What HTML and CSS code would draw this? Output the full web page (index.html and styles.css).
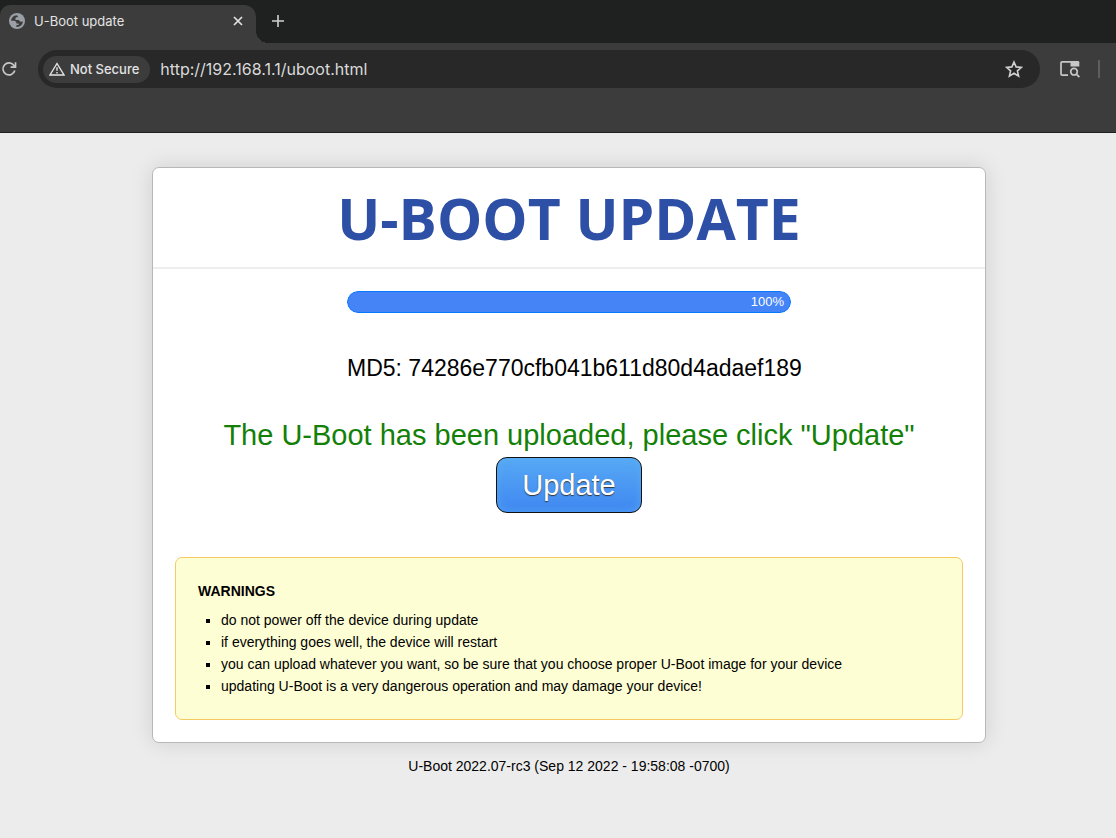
FILE: index.html
```html
<!DOCTYPE html>
<html lang="en">
<head>
    <meta charset="UTF-8">
    <meta name="viewport" content="width=device-width, initial-scale=1">
    <title>U-Boot update</title>
    <link rel="stylesheet" href="styles.css">
</head>
<body>

<header class="browser">
    <div class="tab-strip">
        <div class="tab">
            <svg class="globe" viewBox="0 0 16 16" width="16" height="16">
                <circle cx="8" cy="8" r="8" fill="#9aa0a6"/>
                <path d="M7.6 2.2C4.6 2.4 2.2 4.8 2.1 7.7H5c1.3 0 2.4 1 2.4 2.3v.6h2.2v1.3H7.4v2c3.6.3 6.4-2.2 6.5-5.7-.8.5-1.8.7-2.7.3-.7-.3-1-.9-1.1-1.6H6.5V5.4c0-.7.5-1.2 1.2-1.2h1.1V3.4c0-.5-.5-1-1.2-1.2z" fill="#3c3c3c"/>
            </svg>
            <span class="tab-title">U-Boot update</span>
            <button class="icon-btn tab-close" aria-label="Close tab">
                <svg viewBox="0 0 10 10" width="10" height="10"><path d="M1 1l8 8M9 1l-8 8" stroke="#e3e3e3" stroke-width="1.7"/></svg>
            </button>
        </div>
        <button class="icon-btn new-tab" aria-label="New tab">
            <svg viewBox="0 0 12 12" width="12" height="12"><path d="M6 0v12M0 6h12" stroke="#d0d0d0" stroke-width="1.6"/></svg>
        </button>
    </div>
    <div class="toolbar">
        <button class="icon-btn reload" aria-label="Reload">
            <svg viewBox="0 0 16 16" width="16" height="16" fill="none" stroke="#c7c7c7" stroke-width="1.7"><path d="M13.8 9.5A6 6 0 1 1 12.8 4.3L14.3 6M14.5 1.3V6.2H9.6"/></svg>
        </button>
        <div class="address">
            <button class="security">
                <svg viewBox="0 0 16 14" width="16" height="14"><path d="M8 1.5L15 13H1z" fill="none" stroke="#e3e3e3" stroke-width="1.4"/><path d="M8 5.3v3.5M8 10v1.4" stroke="#e3e3e3" stroke-width="1.4"/></svg>
                Not Secure
            </button>
            <input class="url" type="text" aria-label="Address" value="http://192.168.1.1/uboot.html">
            <button class="icon-btn star" aria-label="Bookmark this tab">
                <svg viewBox="0 0 18 18" width="18" height="18"><path d="M9 2l2.1 4.9 5.3.5-4 3.5 1.2 5.2L9 13.3l-4.6 2.8 1.2-5.2-4-3.5 5.3-.5z" fill="none" stroke="#d0d0d0" stroke-width="1.6"/></svg>
            </button>
        </div>
        <button class="icon-btn side-search" aria-label="Search this page">
            <svg viewBox="0 0 20 18" width="20" height="18"><path d="M8 15.2H2.2a1.2 1.2 0 0 1-1.2-1.2V3a1.2 1.2 0 0 1 1.2-1.2H18" fill="none" stroke="#c7c7c7" stroke-width="1.7"/><path d="M10.5 1H18a1.3 1.3 0 0 1 1.3 1.3V6.5h-8.8z" fill="#c7c7c7"/><circle cx="14" cy="11.7" r="3.3" fill="none" stroke="#c7c7c7" stroke-width="1.7"/><path d="M16.4 14.1l3 3" stroke="#c7c7c7" stroke-width="1.8"/></svg>
        </button>
        <span class="divider"></span>
    </div>
</header>

<div class="page">
    <main id="m">
        <h1>U-BOOT UPDATE</h1>
        <div class="bar" role="progressbar" aria-label="Upload" aria-valuenow="100">
            <div class="bar-fill" style="width: 100%">100%</div>
        </div>
        <div class="md5">MD5: 74286e770cfb041b611d80d4adaef189</div>
        <form class="upload" onsubmit="return false">
            <p>The U-Boot has been uploaded, please click "Update"</p>
            <button class="update" type="submit">Update</button>
        </form>
        <div class="warnings">
            <strong>WARNINGS</strong>
            <ul>
                <li>do not power off the device during update</li>
                <li>if everything goes well, the device will restart</li>
                <li>you can upload whatever you want, so be sure that you choose proper U-Boot image for your device</li>
                <li>updating U-Boot is a very dangerous operation and may damage your device!</li>
            </ul>
        </div>
    </main>
    <footer>U-Boot 2022.07-rc3 (Sep 12 2022 - 19:58:08 -0700)</footer>
</div>

</body>
</html>
```
FILE: styles.css
```css
* {
    box-sizing: border-box;
}
body {
    margin: 0;
    overflow-x: hidden;
    background: #ececec;
    color: #000;
    font-family: "Liberation Sans", Arial, sans-serif;
    font-size: 14px;
}
button {
    font-family: inherit;
    cursor: pointer;
}

/* browser window */
.browser {
    height: 133px;
    background: #3c3c3c;
    border-bottom: 1px solid #1f2020;
    font-family: Inter, Roboto, sans-serif;
}
.tab-strip {
    display: flex;
    height: 43px;
    padding-top: 5px;
    background: #1f2120;
}
.tab {
    position: relative;
    display: flex;
    align-items: center;
    width: 256px;
    padding: 0 13px 6px 9px;
    background: #3c3c3c;
    border-radius: 10px 12px 0 0;
}
.tab::after {
    content: "";
    position: absolute;
    left: 100%;
    bottom: 0;
    width: 12px;
    height: 12px;
    background: radial-gradient(circle at 100% 0, #1f2120 12px, #3c3c3c 12px);
}
.tab-title {
    flex: 1;
    margin-left: 9px;
    color: #e3e3e3;
    font-size: 13px;
}
.icon-btn {
    display: flex;
    align-items: center;
    justify-content: center;
    padding: 0;
    border: 0;
    background: none;
}
.new-tab {
    width: 44px;
    height: 32px;
}
.toolbar {
    display: flex;
    align-items: center;
    height: 52px;
    padding-left: 1px;
}
.address {
    display: flex;
    flex: 1;
    align-items: center;
    height: 38px;
    margin-left: 21px;
    padding: 0 17px 0 5px;
    background: #282828;
    border-radius: 19px;
}
.security {
    display: flex;
    align-items: center;
    gap: 5px;
    height: 27px;
    padding: 0 11px 0 6px;
    border: 0;
    border-radius: 14px;
    background: #3c3c3c;
    color: #e3e3e3;
    font-size: 13px;
    font-weight: 500;
}
.url {
    flex: 1;
    min-width: 0;
    margin-left: 10px;
    padding: 0;
    border: 0;
    outline: 0;
    background: none;
    color: #dadada;
    font-family: inherit;
    font-size: 16px;
}
.side-search {
    margin-left: 20px;
}
.divider {
    width: 2px;
    height: 18px;
    margin: 0 16px 0 18px;
    background: #5e5e5e;
}

/* update page, runs a little past the right edge of the window */
.page {
    margin-right: -22px;
    padding: 34px 22px 0;
}
#m {
    max-width: 834px;
    margin: 0 auto;
    background: #fff;
    border: 1px solid #b8b8b8;
    border-radius: 7px;
    box-shadow: 0 0 22px rgba(0, 0, 0, 0.12);
    text-align: center;
}
h1 {
    margin: 0;
    padding: 12px 0 11px;
    border-bottom: 2px solid #eee;
    color: #2d4fa5;
    font-family: "Open Sans", "Noto Sans", sans-serif;
    font-size: 57px;
    font-weight: bold;
    line-height: 76px;
}
.bar {
    max-width: 444px;
    margin: 22px auto 0;
    border-radius: 11px;
    overflow: hidden;
}
.bar-fill {
    height: 22px;
    padding-right: 6px;
    background: #4584f7;
    border: 1px solid #0877ff;
    border-radius: 11px;
    color: #fff;
    font-size: 13px;
    line-height: 20px;
    text-align: right;
}
.md5 {
    max-width: 444px;
    margin: 40px auto 0;
    font-size: 23px;
    line-height: 30px;
    text-align: left;
    white-space: nowrap;
}
.upload {
    margin-top: 32px;
    color: #138008;
    font-size: 29px;
}
.upload p {
    margin: 0;
    line-height: 40px;
}
.update {
    display: block;
    width: 146px;
    height: 56px;
    margin: 2px auto 0;
    padding: 0;
    border: 1px solid #111;
    border-radius: 11px;
    background: linear-gradient(#57a9f5, #3f87f1);
    box-shadow: inset 0 0 8px rgba(90, 175, 245, 0.7);
    color: #fff;
    font-size: 29px;
    text-shadow: 0 1px 1px #333;
}
.warnings {
    margin: 44px 22px 22px;
    padding: 22px;
    background: #fefed5;
    border: 1px solid #f7c963;
    border-radius: 7px;
    line-height: 22px;
    text-align: left;
}
.warnings ul {
    margin: 7px 0 0;
    padding-left: 23px;
    list-style: square;
}
footer {
    margin-top: 12px;
    line-height: 22px;
    text-align: center;
}
```
